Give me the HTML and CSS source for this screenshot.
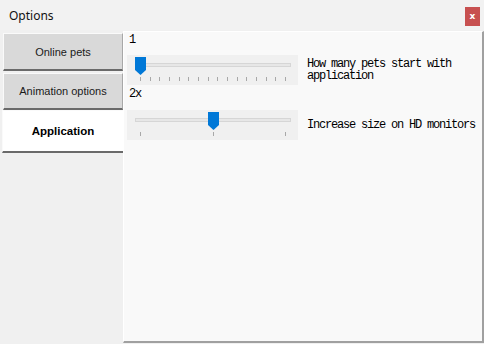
FILE: index.html
```html
<!DOCTYPE html>
<html>
<head>
<meta charset="utf-8">
<link rel="stylesheet" href="styles.css">
</head>
<body>
<div class="window">
  <div class="titlebar">
    <span class="title">Options</span>
    <span class="close">x</span>
  </div>
  <div class="main">
    <div class="sidebar">
      <div class="tab">Online pets</div>
      <div class="tab second">Animation options</div>
      <div class="tab active">Application</div>
    </div>
    <div class="panel">
      <div class="value">1</div>
      <div class="row">
        <div class="slider">
          <div class="track"></div>
          <div class="thumb" style="left:8px"><svg width="11" height="18" viewBox="0 0 11 18"><path d="M0 0H11V13L5.5 18L0 13Z" fill="#0078d7"/></svg></div>
          <div class="ticks">
            <i></i><i></i><i></i><i></i><i></i><i></i><i></i><i></i><i></i><i></i><i></i><i></i><i></i><i></i><i></i><i></i>
          </div>
        </div>
        <div class="desc">How many pets start with application</div>
      </div>
      <div class="value v2">2x</div>
      <div class="row">
        <div class="slider">
          <div class="track"></div>
          <div class="thumb" style="left:81px"><svg width="11" height="18" viewBox="0 0 11 18"><path d="M0 0H11V13L5.5 18L0 13Z" fill="#0078d7"/></svg></div>
          <div class="ticks">
            <i></i><i></i><i></i>
          </div>
        </div>
        <div class="desc">Increase size on HD monitors</div>
      </div>
    </div>
  </div>
</div>
</body>
</html>
```
FILE: styles.css
```css
html, body {
  margin: 0;
  padding: 0;
}
body {
  width: 484px;
  height: 344px;
  background: #f0f0f0;
  font-family: "Noto Sans", "Open Sans", sans-serif;
  overflow: hidden;
}
.window {
  display: flex;
  flex-direction: column;
  height: 344px;
}
.titlebar {
  height: 30px;
  display: flex;
  align-items: center;
  padding-left: 9px;
  background: #f2f2f2;
  flex: none;
}
.title {
  font-size: 12px;
  color: #111;
}
.close {
  margin-left: auto;
  margin-right: 4px;
  width: 15px;
  height: 19px;
  margin-top: 2px;
  background: #c75050;
  color: #fff;
  font-size: 9px;
  font-weight: bold;
  font-family: "DejaVu Sans", sans-serif;
  display: flex;
  align-items: center;
  justify-content: center;
}
.main {
  flex: 1;
  display: flex;
  min-height: 0;
}
.sidebar {
  width: 120px;
  padding: 3px 0 0 3px;
  display: flex;
  flex-direction: column;
  background: #f0f0f0;
}
.tab {
  height: 38px;
  box-sizing: border-box;
  display: flex;
  align-items: center;
  justify-content: center;
  background: #d9d9d9;
  border-top: 1px solid #fafafa;
  border-left: 1px solid #fafafa;
  border-right: 1px solid #a8a8a8;
  border-bottom: 2px solid #6a6a6a;
  font-family: "Liberation Sans", Arial, sans-serif;
  font-size: 11px;
  color: #1a1a1a;
  margin-bottom: 2px;
}
.tab.second {
  height: 37px;
  margin-bottom: 0;
}
.tab.active {
  height: 43px;
  margin-left: -1px;
  margin-right: -1px;
  background: #ffffff;
  font-weight: bold;
  font-size: 11.5px;
  color: #000;
}
.panel {
  flex: 1;
  margin-top: 1px;
  margin-bottom: 1px;
  background: #f9f9f9;
  border-top: 1px solid #ffffff;
  border-left: 1px solid #ffffff;
  border-right: 2px solid #a0a0a0;
  border-bottom: 2px solid #a0a0a0;
  padding: 0 0 0 3px;
}
.value {
  font-family: "Liberation Mono", monospace;
  font-size: 12px;
  letter-spacing: -1.2px;
  color: #000;
  height: 23px;
  line-height: 16px;
  padding-left: 2px;
  padding-top: 0;
}
.value.v2 {
  height: 25px;
  padding-top: 1px;
  box-sizing: border-box;
}
.row {
  display: flex;
  align-items: center;
}
.slider {
  position: relative;
  width: 171px;
  height: 30px;
  background: #f0f0f0;
  flex: none;
}
.track {
  position: absolute;
  left: 8px;
  right: 7px;
  top: 8px;
  height: 2px;
  background: #e7e7e7;
  border: 1px solid #d6d6d6;
}
.thumb {
  position: absolute;
  top: 2px;
  width: 11px;
  height: 18px;
}
.thumb svg {
  display: block;
}
.ticks {
  position: absolute;
  left: 13px;
  right: 12px;
  top: 22px;
  height: 4px;
  display: flex;
  justify-content: space-between;
}
.ticks i {
  width: 1px;
  height: 4px;
  background: #a8a8a8;
}
.desc {
  margin-left: 9px;
  flex: 1;
  padding-right: 2px;
  font-family: "Liberation Mono", monospace;
  font-size: 12px;
  letter-spacing: -1.2px;
  line-height: 12px;
  color: #000;
}
```
